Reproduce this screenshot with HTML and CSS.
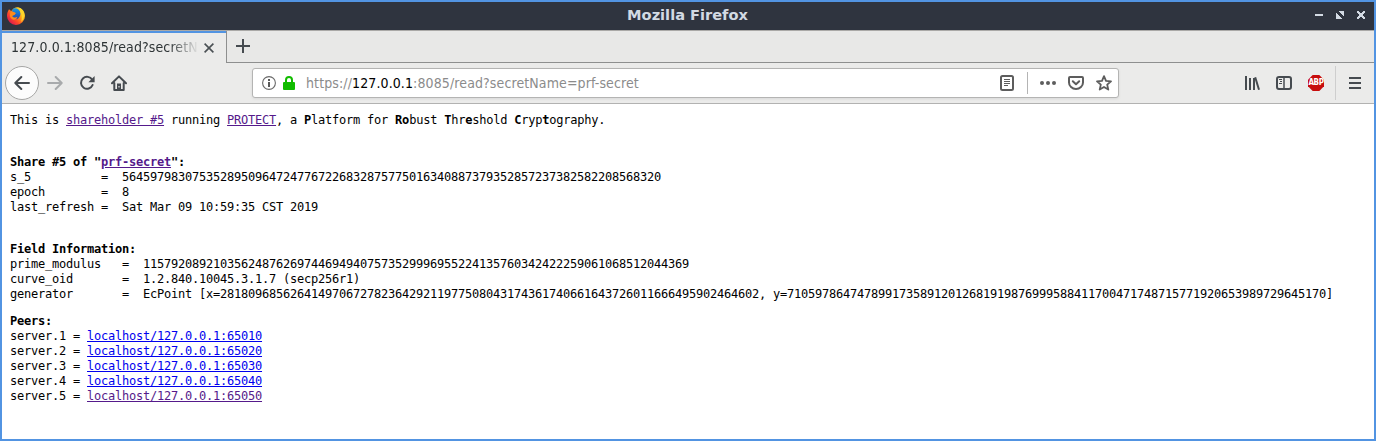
FILE: index.html
```html
<!DOCTYPE html>
<html lang="en">
<head>
<meta charset="utf-8">
<title>Mozilla Firefox</title>
<link rel="stylesheet" href="styles.css">
</head>
<body>
<div class="window">
  <header class="titlebar">
    <svg class="logo" width="20" height="20" viewBox="0 0 20 20">
      <defs>
        <linearGradient id="fire" x1="0.85" y1="0.1" x2="0.15" y2="0.8"><stop offset="0" stop-color="#ffe72b"/><stop offset=".4" stop-color="#ff9a18"/><stop offset=".72" stop-color="#ff4a28"/><stop offset="1" stop-color="#e0204a"/></linearGradient>
        <linearGradient id="globe" x1="0" y1="0" x2="0" y2="1"><stop offset="0" stop-color="#169ce5"/><stop offset="1" stop-color="#2544ad"/></linearGradient>
      </defs>
      <path fill="url(#fire)" d="M3 3.200 5.200 5C7 2 10 .8 12 1.200c4 .8 7 4.300 7 8.800a9 9 0 0 1-18 0C1 7.200 1.800 5 3 3.200Z"/>
      <path fill="url(#globe)" d="M7.500 2.600c2.500-1.200 5.500.2 6.500 3 .9 2.400.3 5.200-1.600 6.700-1.700 1.300-4.200 1.100-5.700-.2-1-.9-1.300-2-.9-3.100l2.700-.3L9.800 7 7.500 6 5.800 5.200Z"/>
      <path fill="#ff8b1a" d="M4.800 5.600 7.500 5.900l2.200 1.300L8.200 9l-2 .9c.9 1.700 3.300 2.300 5.300.9-.6 2.400-2.800 3.500-4.800 2.700C3.500 12.300 3.300 8.200 4.800 5.600Z"/>
      <path fill="#ffd52a" d="M12.500 1.500c2.600.8 4.900 3.200 5.500 6.200.5 3.300-.7 6.300-2.800 8.200.6-2.500.9-4.800.2-7.200-.6-2.400-1.600-4-2.900-7.200Z"/>
    </svg>
    <h1 class="window-title">Mozilla Firefox</h1>
    <svg class="controls" width="54" height="10" viewBox="0 0 54 10" fill="#d3dae3" shape-rendering="crispEdges">
      <path d="M1 4h8v2H1zM24 1h6v6l-2-2-2-2zM22 3v6h6l-2-2-2-2z"/>
      <path d="M43 1h2v1h1v1h2V2h1V1h2v2h-1v1h-1v2h1v1h1v2h-2V8h-1V7h-2v1h-1v1h-2V7h1V6h1V4h-1V3h-1z"/>
    </svg>
  </header>
  <div class="tabs">
    <div class="tab">
      <span class="tab-label">127.0.0.1:8085/read?secretN</span>
      <svg width="10" height="10" viewBox="0 0 10 10" fill="none" stroke="#4a5054" stroke-width="1.600"><path d="m.6.6 8.800 8.800M9.400.6.6 9.400"/></svg>
    </div>
    <div class="tab-rest">
      <svg width="14" height="14" viewBox="0 0 14 14" fill="none" stroke="#464b50" stroke-width="2"><path d="M7 0v14M0 7h14"/></svg>
    </div>
  </div>
  <nav class="toolbar">
    <span class="back"><svg width="16" height="16" viewBox="0 0 16 16" class="line"><path d="M15 8H1.500M7.300 2 1.300 8l6 6"/></svg></span>
    <svg width="16" height="16" viewBox="0 0 16 16" class="line forward"><path d="M1 8h13.500M8.700 2l6 6-6 6"/></svg>
    <svg width="16" height="16" viewBox="0 0 16 16" class="line reload"><path d="M13.200 4.800A6 6 0 1 0 13.600 10"/><path d="M15.600 1v6.200H9.400z" fill="#464b50" stroke="none"/></svg>
    <svg width="16" height="16" viewBox="0 0 16 16" class="line home"><path d="M1 8.300 8 1.400l7 6.900M3.300 8v7h9.400V8"/><path d="M6 8.500h4V15H6z" fill="#464b50" stroke="none"/><path d="M8 11v1.500" stroke="#fff" stroke-width="1" stroke-linecap="butt"/></svg>
    <div class="urlbar">
      <svg class="info" width="14" height="14" viewBox="0 0 14 14"><circle cx="7" cy="7" r="6.400" fill="none" stroke="#696969" stroke-width="1.100"/><path d="M6 6h2v5H6zM6 3h2v2H6z" fill="#595959"/></svg>
      <svg class="lock" width="12" height="14" viewBox="0 0 12 14"><path d="M3 7V4a3 3 0 0 1 6 0v3" fill="none" stroke="#12bc00" stroke-width="2"/><rect y="6" width="12" height="8" rx="1" fill="#12bc00"/></svg>
      <span class="url">https://<b>127.0.0.1</b>:8085/read?secretName=prf-secret</span>
      <svg class="reader" width="14" height="16" viewBox="0 0 14 16" fill="none" stroke="#5d5d5d"><rect x="1" y="1" width="12" height="14" rx="1.500" stroke-width="2"/><path d="M4 4.500h6M4 6.500h6M4 8.500h6M4 10.500h4"/></svg>
      <i class="url-separator"></i>
      <svg class="dots" width="16" height="4" viewBox="0 0 16 4" fill="#5d5d5d"><circle cx="2" cy="2" r="2"/><circle cx="8" cy="2" r="2"/><circle cx="14" cy="2" r="2"/></svg>
      <svg class="pocket" width="16" height="16" viewBox="0 0 16 16" fill="none" stroke="#5d5d5d" stroke-width="2" stroke-linecap="round" stroke-linejoin="round"><path d="M2 2h12a1 1 0 0 1 1 1v4.500a7 6.500 0 0 1-14 0V3a1 1 0 0 1 1-1ZM4.800 6.300 8 9.300l3.200-3"/></svg>
      <svg class="star" width="16" height="16" viewBox="0 0 16 16" fill="none" stroke="#5d5d5d" stroke-width="1.800" stroke-linejoin="round"><path d="m8 1.200 2 4.600 5 .5-3.800 3.300 1.100 5L8 12l-4.300 2.600 1.100-5L1 6.300l5-.5z"/></svg>
    </div>
    <svg class="library" width="16" height="16" viewBox="0 0 16 16" fill="none" stroke="#464b50" stroke-width="2"><path d="M2 1v14M6 3v12M10 3v12"/><path d="m11.200 2.300 3.800 12.400"/></svg>
    <svg class="sidebar" width="16" height="16" viewBox="0 0 16 16" fill="none" stroke="#464b50"><rect x="1" y="2" width="14" height="12" rx="2" stroke-width="2"/><path d="M8 2v12" stroke-width="1.500"/><path d="M3 4.500h3M4 6.500h2M3 8.500h3"/></svg>
    <span class="abp"><svg width="16" height="16" viewBox="0 0 16 16"><path d="M4.700 0h6.600L16 4.700v6.600L11.300 16H4.700L0 11.300V4.700z" fill="#c70d0d"/></svg><em>ABP</em></span>
    <i class="menu-separator"></i>
    <svg class="menu" width="12" height="12" viewBox="0 0 12 12" fill="none" stroke="#464b50" stroke-width="2"><path d="M0 1h12M0 6h12M0 11h12"/></svg>
  </nav>
  <main class="page">
    <p>This is <a class="visited" href="#">shareholder #5</a> running <a class="visited" href="#">PROTECT</a>, a <b>P</b>latform for <b>Ro</b>bust <b>T</b>hr<b>e</b>shold <b>C</b>ryp<b>t</b>ography.</p>
    <pre class="share"><b>Share #5 of "<a class="visited" href="#">prf-secret</a>":</b>
s_5          =  56459798307535289509647247767226832875775016340887379352857237382582208568320
epoch        =  8
last_refresh =  Sat Mar 09 10:59:35 CST 2019</pre>
    <pre class="field"><b>Field Information:</b>
prime_modulus   =  115792089210356248762697446949407573529996955224135760342422259061068512044369
curve_oid       =  1.2.840.10045.3.1.7 (secp256r1)
generator       =  EcPoint [x=28180968562641497067278236429211977508043174361740661643726011666495902464602, y=71059786474789917358912012681919876999588411700471748715771920653989729645170]</pre>
    <pre class="peers"><b>Peers:</b>
server.1 = <a href="#">localhost/127.0.0.1:65010</a>
server.2 = <a href="#">localhost/127.0.0.1:65020</a>
server.3 = <a href="#">localhost/127.0.0.1:65030</a>
server.4 = <a href="#">localhost/127.0.0.1:65040</a>
server.5 = <a class="visited" href="#">localhost/127.0.0.1:65050</a></pre>
  </main>
</div>
</body>
</html>
```
FILE: styles.css
```css
* { box-sizing: border-box; }
body { margin: 0; overflow: hidden; }
svg, i { display: block; flex: none; }

.window {
  display: flex;
  flex-direction: column;
  height: 441px;
  border: 2px solid #5294e2;
  background: #fff;
  font-family: "DejaVu Sans", sans-serif;
}

.titlebar {
  display: flex;
  align-items: center;
  height: 28px;
  padding: 0 6px 0 4px;
  background: #2f343f;
}
.logo { margin-top: -1px; }
.window-title {
  flex: 1;
  margin: 0 0 0 35px;
  text-align: center;
  font-size: 14.600px;
  line-height: 28px;
  padding-bottom: 2px;
  color: #d3dae3;
}
.controls { margin-top: -2px; }

.tabs {
  display: flex;
  height: 33px;
  border-top: 1px solid #aaa9a7;
  background: #e8e8e7;
}
.tab {
  display: flex;
  align-items: center;
  width: 224px;
  padding: 0 12px 0 9px;
  gap: 7px;
  border-top: 2px solid #5294e2;
  background: #ebebea;
}
.tab-label, .url {
  white-space: nowrap;
  font-family: "DejaVu Sans Condensed", "DejaVu Sans", sans-serif;
  font-stretch: condensed;
  font-size: 14px;
  letter-spacing: .11px;
}
.tab-label {
  width: 186px;
  padding-bottom: 2px;
  line-height: 20px;
  color: #2e3436;
  -webkit-mask-image: linear-gradient(to right, #000 158px, transparent 188px);
  mask-image: linear-gradient(to right, #000 158px, transparent 188px);
}
.tab-rest {
  flex: 1;
  padding: 8px 0 0 9px;
  border: solid #8e8f8f;
  border-width: 0 0 1px 1px;
}

.toolbar {
  display: flex;
  align-items: center;
  height: 41px;
  padding: 0 13px 0 3px;
  border-bottom: 1px solid #b2b2b1;
  background: #ebebea;
}
.line {
  fill: none;
  stroke: #464b50;
  stroke-width: 2;
  stroke-linecap: round;
  stroke-linejoin: round;
}
.back {
  display: flex;
  align-items: center;
  justify-content: center;
  width: 34px;
  height: 34px;
  border: 1px solid #a6a6a5;
  border-radius: 50%;
  background: #fcfcfc;
}
.forward { margin-left: 8px; opacity: .4; }
.reload { margin-left: 16px; }
.home { margin-left: 16px; }
.urlbar {
  display: flex;
  align-items: center;
  width: 867px;
  height: 30px;
  margin-left: 125px;
  padding: 0 6px 0 9px;
  border: 1px solid #b4b4b3;
  border-radius: 3px;
  background: #fff;
  box-shadow: 0 1px 3px rgba(0, 0, 0, .08);
}
.lock { margin-left: 7px; }
.url {
  flex: 1;
  margin-left: 11px;
  color: #8b8b8b;
}
.url b { font-weight: normal; color: #000; }
.url-separator { width: 1px; height: 22px; margin: 0 12px 0 13px; background: #b4b4b4; }
.pocket { margin-left: 12px; }
.star { margin-left: 12px; }
.library { margin-left: 125px; }
.sidebar { margin-left: 16px; }
.abp { display: grid; place-items: center; width: 16px; margin-left: 16px; }
.abp > * { grid-area: 1 / 1; }
.abp em {
  font: bold 8px/10px "DejaVu Sans Condensed", "DejaVu Sans", sans-serif;
  font-stretch: condensed;
  letter-spacing: -.4px;
  color: #fff;
}
.menu-separator { width: 1px; height: 34px; margin: 0 13px 0 11px; background: #cecece; }

.page {
  padding: 9px 8px 8px;
  font: 12px/15px "DejaVu Sans Mono", monospace;
  letter-spacing: -0.2246px;
  color: #000;
}
.page p { margin: 0 0 27px; }
.page pre { margin: 0; font: inherit; }
.page .field { margin-top: 27px; }
.page .peers { margin-top: 12px; }
.page a { color: #0000ee; }
.page a.visited { color: #551a8b; }
```
